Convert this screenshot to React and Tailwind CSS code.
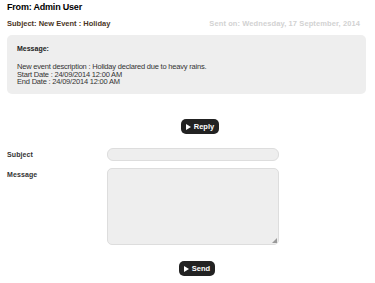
import React from 'react';

function PlayButton({ label }) {
  return (
    <button className="flex items-center gap-[3px] h-[15px] px-[5px] rounded-[5px] bg-[#222] text-white text-[7.5px] font-bold leading-none">
      <svg width="5" height="6" viewBox="0 0 5 6">
        <path d="M0 0 L5 3 L0 6 Z" fill="white" />
      </svg>
      {label}
    </button>
  );
}

export default function App() {
  return (
    <div className="w-[375px] h-[283px] bg-white overflow-hidden font-['Liberation_Sans',Arial,sans-serif]">
      {/* header */}
      <div className="px-[7px] pt-[1px]">
        <div className="text-[9px] font-bold text-black leading-[12px] tracking-[-0.2px]">From: Admin User</div>
        <div className="flex justify-between items-center mt-[6px] pr-[8px]">
          <span className="text-[7.5px] font-bold text-[#4a3526] leading-[10px]">Subject: New Event : Holiday</span>
          <span className="text-[7.5px] font-bold text-[#d2d2d2] leading-[10px] tracking-[0.1px]">Sent on: Wednesday, 17 September, 2014</span>
        </div>
      </div>

      {/* message box */}
      <div className="mx-[7px] mt-[6px] w-[359px] h-[59px] rounded-[5px] bg-[#eeeeee] px-[10px] pt-[9px]">
        <div className="text-[7px] font-bold text-[#222] leading-[10px]">Message:</div>
        <div className="mt-[9px] text-[7.5px] text-[#333] leading-[7.5px] tracking-[-0.2px]">
          <div>New event description : Holiday declared due to heavy rains.</div>
          <div>Start Date : 24/09/2014 12:00 AM</div>
          <div>End Date : 24/09/2014 12:00 AM</div>
        </div>
      </div>

      <div className="flex justify-center mt-[25px] pl-[25px]">
        <PlayButton label="Reply" />
      </div>

      {/* form */}
      <div className="mt-[14px] px-[7px]">
        <div className="flex items-center">
          <label className="w-[100px] text-[7px] font-bold text-[#333] tracking-[0.1px] pt-[1px]">Subject</label>
          <div className="w-[172px] h-[13px] rounded-[6px] bg-[#eeeeee] border border-[#dddddd]" />
        </div>
        <div className="flex items-start mt-[7px]">
          <label className="w-[100px] text-[7px] font-bold text-[#333] pt-[2px] tracking-[0.1px]">Message</label>
          <div className="relative w-[172px] h-[77px] rounded-[5px] bg-[#eeeeee] border border-[#dddddd]">
            <svg className="absolute right-[1px] bottom-[1px]" width="5" height="5" viewBox="0 0 5 5">
              <path d="M5 0 L5 5 L0 5 Z" fill="#999" />
            </svg>
          </div>
        </div>
      </div>

      <div className="flex justify-center mt-[16px] pl-[19px]">
        <PlayButton label="Send" />
      </div>
    </div>
  );
}
